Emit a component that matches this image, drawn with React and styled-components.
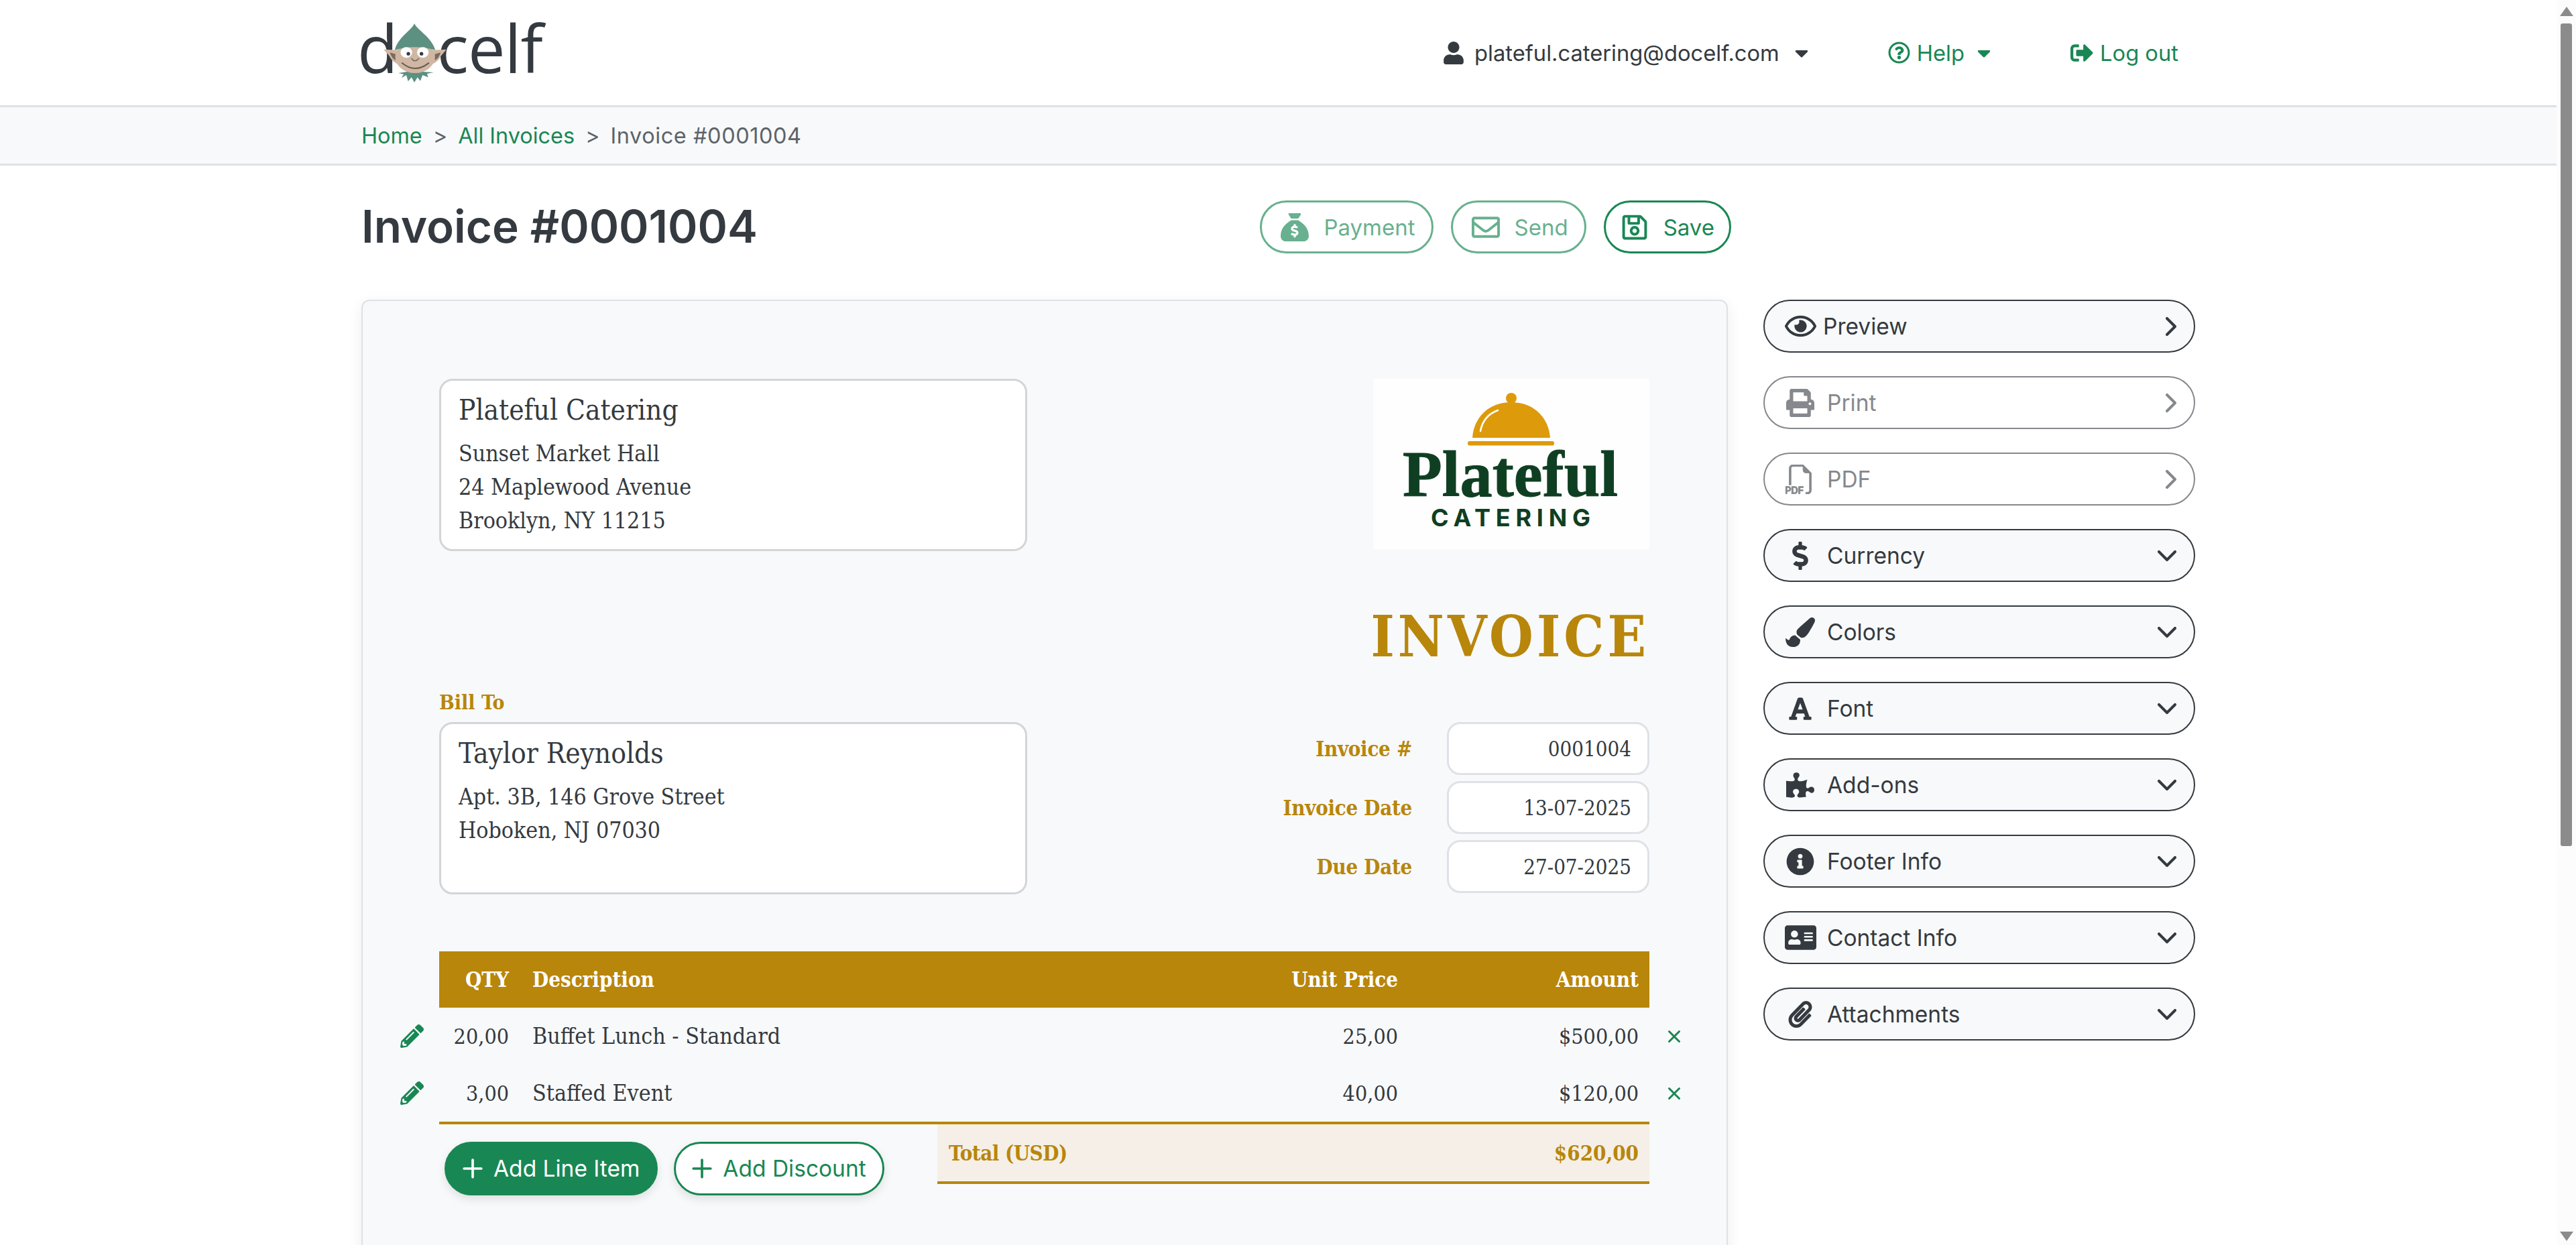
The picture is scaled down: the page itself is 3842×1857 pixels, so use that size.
import React from "react"
import styled, { createGlobalStyle } from "styled-components"
import { ChevronDown, ChevronRight, Plus, X } from "lucide-react"
import {
  FaAddressCard,
  FaCaretDown,
  FaDollarSign,
  FaFont,
  FaInfoCircle,
  FaPaintBrush,
  FaPaperclip,
  FaPencilAlt,
  FaPrint,
  FaPuzzlePiece,
  FaRegEnvelope,
  FaRegEye,
  FaRegQuestionCircle,
  FaRegSave,
  FaSignOutAlt,
  FaUser,
} from "react-icons/fa"
import { FaSackDollar } from "react-icons/fa6"
import { BsFiletypePdf } from "react-icons/bs"

const GREEN = "#198754"
const DARK = "#343a40"
const GOLD = "#b8860b"
const SANS = `Inter, "Noto Sans", sans-serif`
const SERIF = `"DejaVu Serif Condensed", "DejaVu Serif", serif`

const GlobalStyle = createGlobalStyle`
  html, body {
    margin: 0;
    height: 100%;
    overflow: hidden;
    background: #fff;
  }
  * {
    box-sizing: border-box;
  }
`

function ElfMark() {
  return (
    <ElfSvg viewBox="130 30 285 265">
      <path d="M130 147 L192 150 L192 212 Q165 198 155 175 Z" fill="#cfb7a3" />
      <path d="M412 147 L352 150 L350 212 Q378 198 388 175 Z" fill="#cfb7a3" />
      <path d="M158 160 L184 168 L184 196 Q166 186 158 160 Z" fill="#7a6a5e" />
      <path d="M386 160 L360 168 L360 196 Q378 186 386 160 Z" fill="#7a6a5e" />
      <path
        d="M196 253 L235 247 L305 247 L355 250 L325 256 L330 272 L305 262 L295 288 L282 272 L268 295 L255 272 L240 290 L232 262 L210 275 L220 258 Z"
        fill="#5c9080"
      />
      <ellipse cx="271" cy="180" rx="89" ry="73" fill="#cfb7a3" />
      <path d="M268 30 C255 62 195 90 180 150 Q268 122 362 150 C345 90 283 62 268 30 Z" fill="#5c9080" />
      <ellipse cx="232" cy="160" rx="26" ry="24" fill="#fff" />
      <ellipse cx="306" cy="160" rx="26" ry="24" fill="#fff" />
      <circle cx="241" cy="166" r="8" fill="#343a40" />
      <circle cx="300" cy="166" r="8" fill="#343a40" />
      <path d="M256 188 Q270 208 287 188" fill="none" stroke="#7a6a5e" strokeWidth="5" strokeLinecap="round" />
      <path d="M213 208 Q270 256 332 208" fill="none" stroke="#6b5a4e" strokeWidth="6" strokeLinecap="round" />
    </ElfSvg>
  )
}

function BrandLogo() {
  return (
    <BrandSvg viewBox="0 0 412 254">
      <circle cx="206" cy="29" r="8" fill="#dd9a0b" />
      <path d="M148 88 C150 58 172 35 206 35 C240 35 262 58 264 88 Z" fill="#dd9a0b" />
      <path d="M160 78 C163 62 172 52 186 47" fill="none" stroke="#fff" strokeWidth="2.6" strokeLinecap="round" />
      <rect x="141" y="93" width="129" height="6.5" rx="3" fill="#dd9a0b" />
      <text
        x="44"
        y="175"
        textLength="321"
        lengthAdjust="spacingAndGlyphs"
        fontFamily="'Liberation Serif', serif"
        fontWeight="700"
        fontSize="97"
        fill="#0f3f22"
        stroke="#0f3f22"
        strokeWidth="1"
      >
        Plateful
      </text>
      <text
        x="86"
        y="220"
        textLength="238"
        fontFamily="Inter, sans-serif"
        fontWeight="700"
        fontSize="36"
        fill="#0f3f22"
      >
        CATERING
      </text>
    </BrandSvg>
  )
}

function ScrollArrow({ down }) {
  return (
    <ArrowSvg viewBox="0 0 20 14">
      <path d={down ? "M0 0 L20 0 L10 14 Z" : "M0 14 L20 14 L10 0 Z"} fill="#8b8b8b" />
    </ArrowSvg>
  )
}

const sideItems = [
  { label: "Preview", icon: <FaRegEye size={47} />, open: true, tight: true },
  { label: "Print", icon: <FaPrint size={42} />, off: true, open: true },
  { label: "PDF", icon: <BsFiletypePdf size={44} strokeWidth={0.3} />, off: true, open: true },
  { label: "Currency", icon: <FaDollarSign size={42} /> },
  { label: "Colors", icon: <FaPaintBrush size={44} /> },
  { label: "Font", icon: <FaFont size={38} /> },
  { label: "Add-ons", icon: <FaPuzzlePiece size={42} /> },
  { label: "Footer Info", icon: <FaInfoCircle size={42} /> },
  { label: "Contact Info", icon: <FaAddressCard size={47} /> },
  { label: "Attachments", icon: <FaPaperclip size={40} /> },
]

const lineItems = [
  { qty: "20,00", desc: "Buffet Lunch - Standard", price: "25,00", amount: "$500,00" },
  { qty: "3,00", desc: "Staffed Event", price: "40,00", amount: "$120,00" },
]

export default function App() {
  return (
    <Shell>
      <GlobalStyle />
      <Page>
        <TopBar>
          <Container>
            <TopRow>
              <Logo>
                d<ElfMark />
                <LogoRest>celf</LogoRest>
              </Logo>
              <Nav>
                <NavItem $gap={14}>
                  <FaUser size={34} />
                  <span>plateful.catering@docelf.com</span>
                  <CaretSlot>
                    <FaCaretDown size={32} />
                  </CaretSlot>
                </NavItem>
                <NavItem $green $gap={10}>
                  <FaRegQuestionCircle size={33} />
                  <span>Help</span>
                  <CaretSlot>
                    <FaCaretDown size={32} />
                  </CaretSlot>
                </NavItem>
                <NavItem $green $gap={10}>
                  <FaSignOutAlt size={34} />
                  <span>Log out</span>
                </NavItem>
              </Nav>
            </TopRow>
          </Container>
        </TopBar>

        <CrumbBar>
          <Container>
            <Crumbs>
              <CrumbLink>Home</CrumbLink>
              <CrumbSep>&gt;</CrumbSep>
              <CrumbLink>All Invoices</CrumbLink>
              <CrumbSep>&gt;</CrumbSep>
              <CrumbCurrent>Invoice #0001004</CrumbCurrent>
            </Crumbs>
          </Container>
        </CrumbBar>

        <Container>
          <TitleRow>
            <Title>Invoice #0001004</Title>
            <ActionRow>
              <ActionButton $faded>
                <FaSackDollar size={42} />
                Payment
              </ActionButton>
              <ActionButton $faded>
                <FaRegEnvelope size={42} />
                Send
              </ActionButton>
              <ActionButton $tight>
                <FaRegSave size={42} />
                Save
              </ActionButton>
            </ActionRow>
          </TitleRow>

          <Columns>
            <Card>
              <HeadRow>
                <AddressBox>
                  <PartyName>Plateful Catering</PartyName>
                  <AddressLine>Sunset Market Hall</AddressLine>
                  <AddressLine>24 Maplewood Avenue</AddressLine>
                  <AddressLine>Brooklyn, NY 11215</AddressLine>
                </AddressBox>
                <BrandLogo />
              </HeadRow>

              <InvoiceWord>INVOICE</InvoiceWord>

              <BillRow>
                <div>
                  <BillLabel>Bill To</BillLabel>
                  <AddressBox>
                    <PartyName>Taylor Reynolds</PartyName>
                    <AddressLine>Apt. 3B, 146 Grove Street</AddressLine>
                    <AddressLine>Hoboken, NJ 07030</AddressLine>
                  </AddressBox>
                </div>
                <MetaList>
                  <MetaRow>
                    <MetaLabel>Invoice #</MetaLabel>
                    <MetaValue>0001004</MetaValue>
                  </MetaRow>
                  <MetaRow>
                    <MetaLabel>Invoice Date</MetaLabel>
                    <MetaValue>13-07-2025</MetaValue>
                  </MetaRow>
                  <MetaRow>
                    <MetaLabel>Due Date</MetaLabel>
                    <MetaValue>27-07-2025</MetaValue>
                  </MetaRow>
                </MetaList>
              </BillRow>

              <TableHead>
                <Right>QTY</Right>
                <DescCell>Description</DescCell>
                <Right>Unit Price</Right>
                <Right>Amount</Right>
              </TableHead>

              {lineItems.map((item) => (
                <ItemRow key={item.desc}>
                  <EditCell>
                    <FaPencilAlt size={35} />
                  </EditCell>
                  <Right>{item.qty}</Right>
                  <ItemDesc>{item.desc}</ItemDesc>
                  <Right>{item.price}</Right>
                  <Right>{item.amount}</Right>
                  <RemoveCell>
                    <X size={40} strokeWidth={2.4} />
                  </RemoveCell>
                </ItemRow>
              ))}

              <TableFoot>
                <AddRow>
                  <AddButton $solid>
                    <Plus size={44} strokeWidth={2} />
                    Add Line Item
                  </AddButton>
                  <AddButton>
                    <Plus size={44} strokeWidth={2} />
                    Add Discount
                  </AddButton>
                </AddRow>
                <TotalBox>
                  <TotalLabel>Total (USD)</TotalLabel>
                  <span>$620,00</span>
                </TotalBox>
              </TableFoot>
            </Card>

            <SideList>
              {sideItems.map((item) => (
                <SideRow key={item.label} $off={item.off} $open={item.open}>
                  <SideIcon>{item.icon}</SideIcon>
                  <SideLabel $tight={item.tight}>{item.label}</SideLabel>
                  {item.open ? <ChevronRight size={48} strokeWidth={2.05} /> : <ChevronDown size={48} strokeWidth={2.05} />}
                </SideRow>
              ))}
            </SideList>
          </Columns>
        </Container>
      </Page>

      <Scrollbar>
        <ScrollArrow />
        <Thumb />
        <ScrollSpacer />
        <ScrollArrow down />
      </Scrollbar>
    </Shell>
  )
}

const Shell = styled.div`
  display: flex;
  height: 100vh;
  overflow: hidden;
  font-family: ${SANS};
  color: ${DARK};
`

const Page = styled.div`
  flex: 1;
  min-width: 0;
  overflow: hidden;
`

const Container = styled.div`
  width: 2735px;
  margin: 0 auto;
`

const TopBar = styled.header`
  height: 160px;
  border-bottom: 3px solid #dee2e6;
`

const TopRow = styled.div`
  display: flex;
  align-items: center;
  justify-content: space-between;
  height: 157px;
`

const Logo = styled.div`
  display: flex;
  align-items: flex-start;
  height: 122px;
  padding-top: 3px;
  margin-left: -6px;
  font-family: "Open Sans", sans-serif;
  font-size: 99px;
  letter-spacing: -1px;
  line-height: 1;
  color: ${DARK};
`

const LogoRest = styled.span`
  margin-left: -15px;
`

const ElfSvg = styled.svg`
  width: 95px;
  height: 88px;
  margin: 14px 0 0 -21px;
  position: relative;
  z-index: 1;
  flex: none;
`

const Nav = styled.nav`
  display: flex;
  align-items: center;
  gap: 113px;
  padding-right: 25px;
`

const NavItem = styled.div`
  display: flex;
  align-items: center;
  flex: none;
  gap: ${(p) => p.$gap}px;
  white-space: nowrap;
  font-size: 32.7px;
  color: ${(p) => (p.$green ? GREEN : DARK)};
`

const CaretSlot = styled.span`
  display: flex;
  margin-left: ${3}px;
`

const CrumbBar = styled.div`
  height: 87px;
  background: #f8f9fa;
  border-bottom: 3px solid #dee2e6;
`

const Crumbs = styled.div`
  display: flex;
  align-items: center;
  height: 84px;
  font-size: 32.4px;
`

const CrumbLink = styled.span`
  color: ${GREEN};
`

const CrumbCurrent = styled.span`
  letter-spacing: 0.6px;
  color: #5c636a;
`

const CrumbSep = styled.span`
  margin: 0 16px;
  color: #5c636a;
`

const TitleRow = styled.div`
  display: flex;
  align-items: center;
  justify-content: space-between;
  width: 2043px;
  height: 79px;
  margin-top: 52px;
`

const Title = styled.h1`
  margin: -2px 0 0;
  font-size: 67.4px;
  font-weight: 600;
  color: ${DARK};
`

const ActionRow = styled.div`
  display: flex;
  gap: 26px;
`

const ActionButton = styled.button`
  display: flex;
  align-items: center;
  gap: 22px;
  height: 79px;
  padding: ${(p) => (p.$tight ? "0 22px 0 22px" : "0 24px 0 28px")};
  border: 3px solid ${GREEN};
  border-radius: 40px;
  background: #fff;
  font-family: ${SANS};
  font-size: 33px;
  color: ${GREEN};
  opacity: ${(p) => (p.$faded ? 0.65 : 1)};
`

const Columns = styled.div`
  display: flex;
  align-items: flex-start;
  gap: 53px;
  margin-top: 69px;
`

const Card = styled.section`
  flex: none;
  width: 2038px;
  min-height: 1700px;
  padding: 116px 115px 116px 114px;
  background: #f8f9fa;
  border: 2px solid #dee2e6;
  border-radius: 12px;
  box-shadow: 0 6px 22px rgba(0, 0, 0, 0.07);
  font-family: ${SERIF};
`

const HeadRow = styled.div`
  display: flex;
  justify-content: space-between;
`

const AddressBox = styled.div`
  width: 877px;
  height: 257px;
  padding: 15px 26px;
  background: #fff;
  border: 3px solid #d3d5d8;
  border-radius: 20px;
  color: ${DARK};
`

const PartyName = styled.div`
  font-size: 42px;
  line-height: 58px;
  margin-bottom: 11px;
`

const AddressLine = styled.div`
  font-size: 33.6px;
  line-height: 50px;
`

const BrandSvg = styled.svg`
  width: 412px;
  height: 254px;
  flex: none;
  background: #fefefe;
`

const InvoiceWord = styled.div`
  margin-top: 76px;
  text-align: right;
  font-size: 84px;
  line-height: 104px;
  font-weight: 700;
  letter-spacing: 5px;
  color: ${GOLD};
`

const BillRow = styled.div`
  display: flex;
  justify-content: space-between;
  margin-top: 29px;
`

const BillLabel = styled.div`
  height: 46px;
  font-size: 30px;
  line-height: 34px;
  font-weight: 700;
  color: ${GOLD};
`

const MetaList = styled.div`
  display: flex;
  flex-direction: column;
  gap: 9px;
  padding-top: 46px;
`

const MetaRow = styled.div`
  display: flex;
  align-items: center;
  justify-content: flex-end;
  gap: 52px;
`

const MetaLabel = styled.div`
  font-size: 31px;
  font-weight: 700;
  letter-spacing: -0.3px;
  color: ${GOLD};
`

const MetaValue = styled.div`
  display: flex;
  align-items: center;
  justify-content: flex-end;
  width: 302px;
  height: 79px;
  padding-right: 24px;
  background: #fff;
  border: 3px solid #dee2e6;
  border-radius: 20px;
  font-size: 31px;
  color: ${DARK};
`

const TableHead = styled.div`
  display: grid;
  grid-template-columns: 104px 1041px 285px 359px;
  align-items: center;
  height: 84px;
  margin-top: 85px;
  padding-right: 16px;
  background: ${GOLD};
  font-size: 31px;
  font-weight: 700;
  color: #fff;
`

const Right = styled.div`
  text-align: right;
`

const DescCell = styled.div`
  padding-left: 35px;
`

const ItemDesc = styled(DescCell)`
  font-size: 33.7px;
`

const ItemRow = styled.div`
  display: grid;
  grid-template-columns: 58px 104px 1041px 285px 359px 68px;
  align-items: center;
  height: 85px;
  margin: 0 -52px 0 -58px;
  font-size: 32px;
  color: ${DARK};
`

const EditCell = styled.div`
  display: flex;
  color: ${GREEN};
`

const RemoveCell = styled.div`
  display: flex;
  padding-left: 38px;
  color: ${GREEN};
`

const TableFoot = styled.div`
  display: flex;
  justify-content: space-between;
  border-top: 4px solid ${GOLD};
`

const AddRow = styled.div`
  display: flex;
  gap: 24px;
  padding: 26px 0 0 8px;
`

const AddButton = styled.button`
  display: flex;
  align-items: center;
  gap: 9px;
  height: 80px;
  padding: 0 24px 0 17px;
  border: 3px solid ${GREEN};
  border-radius: 40px;
  background: ${(p) => (p.$solid ? GREEN : "#fff")};
  box-shadow: 0 6px 14px rgba(0, 0, 0, 0.1);
  font-family: ${SANS};
  font-size: 33.5px;
  color: ${(p) => (p.$solid ? "#fff" : GREEN)};
`

const TotalBox = styled.div`
  display: flex;
  align-items: center;
  justify-content: space-between;
  width: 1062px;
  height: 89px;
  padding: 0 16px 0 17px;
  background: #f5efe7;
  border-bottom: 4px solid ${GOLD};
  font-size: 31px;
  font-weight: 700;
  color: ${GOLD};
`

const TotalLabel = styled.span`
  letter-spacing: -0.5px;
`

const SideList = styled.aside`
  display: flex;
  flex-direction: column;
  gap: 35px;
  width: 644px;
`

const SideRow = styled.div`
  display: flex;
  align-items: center;
  height: 79px;
  padding: 0 ${(p) => (p.$open ? 10 : 16)}px 0 25px;
  background: ${(p) => (p.$off ? "#fff" : "#f8f9fa")};
  border: 2.5px solid ${(p) => (p.$off ? "#85888c" : DARK)};
  border-radius: 40px;
  color: ${(p) => (p.$off ? "#85888c" : DARK)};
`

const SideIcon = styled.div`
  display: flex;
  align-items: center;
  justify-content: center;
  width: 56px;
  flex: none;
`

const SideLabel = styled.div`
  flex: 1;
  margin-left: ${(p) => (p.$tight ? 6 : 12)}px;
  font-size: 33.5px;
`

const Scrollbar = styled.div`
  display: flex;
  flex-direction: column;
  align-items: center;
  width: 29px;
  flex: none;
  padding: 10px 0 6px;
  background: #fcfcfc;
`

const ArrowSvg = styled.svg`
  width: 20px;
  height: 14px;
  flex: none;
`

const Thumb = styled.div`
  width: 17px;
  height: 1227px;
  margin-top: 11px;
  background: #8b8b8b;
  border-radius: 3px;
`

const ScrollSpacer = styled.div`
  flex: 1;
`
